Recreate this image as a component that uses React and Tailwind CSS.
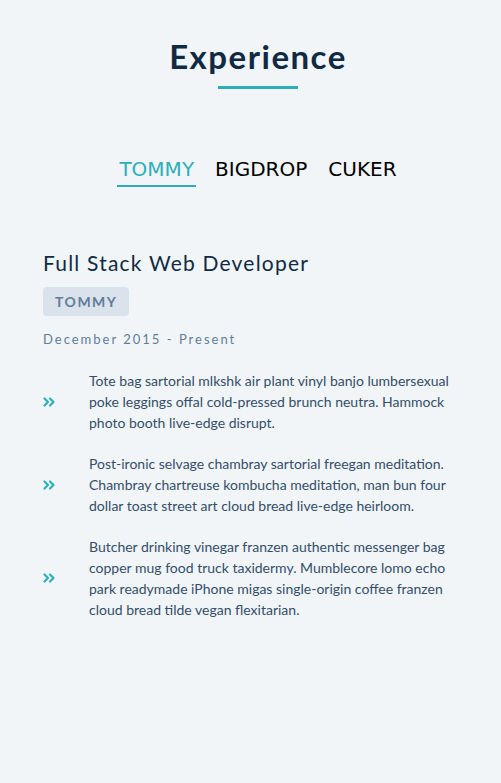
import React, { useState } from 'react';

const jobs = {
  TOMMY: {
    title: 'Full Stack Web Developer',
    dates: 'December 2015 - Present',
    duties: [
      'Tote bag sartorial mlkshk air plant vinyl banjo lumbersexual poke leggings offal cold-pressed brunch neutra. Hammock photo booth live-edge disrupt.',
      'Post-ironic selvage chambray sartorial freegan meditation. Chambray chartreuse kombucha meditation, man bun four dollar toast street art cloud bread live-edge heirloom.',
      'Butcher drinking vinegar franzen authentic messenger bag copper mug food truck taxidermy. Mumblecore lomo echo park readymade iPhone migas single-origin coffee franzen cloud bread tilde vegan flexitarian.',
    ],
  },
  BIGDROP: { title: 'Front-End Engineer', dates: 'May 2015 - December 2015', duties: [] },
  CUKER: { title: 'Engineering Intern', dates: 'May 2014 - September 2015', duties: [] },
};

const Arrows = () => (
  <svg width="12" height="10" viewBox="0 0 12 10" fill="none" stroke="#2cb1bc" strokeWidth="2.2" strokeLinecap="round" strokeLinejoin="round">
    <path d="M1.5 1.5 5 5 1.5 8.5" />
    <path d="M7 1.5 10.5 5 7 8.5" />
  </svg>
);

export default function App() {
  const [active, setActive] = useState('TOMMY');
  const job = jobs[active];

  return (
    <div className="min-h-screen bg-[#f1f5f8] font-['Lato',sans-serif] text-[#102a43]">
      <div className="pt-[36px] pl-[15px] flex flex-col items-center">
        <h2 className="text-[33px] leading-[40px] font-bold tracking-[1.5px] text-[#102a43]">Experience</h2>
        <div className="mt-[10px] w-[80px] h-[3px] bg-[#2caeba]" />
      </div>

      <div className="mt-[67px] pl-[15px] flex justify-center gap-[17px]">
        {Object.keys(jobs).map((k) => (
          <button
            key={k}
            onClick={() => setActive(k)}
            className={`px-[2px] pb-[3px] text-[20px] leading-[26px] font-['DejaVu_Sans',sans-serif] border-b-2 ${
              active === k ? 'text-[#2caeba] border-[#2caeba]' : 'text-black border-transparent'
            }`}
          >
            {k}
          </button>
        ))}
      </div>

      <div className="mt-[62px] px-[43px]">
        <h3 className="text-[21px] leading-[28px] tracking-[1.2px] text-[#102a43]">{job.title}</h3>
        <span className="mt-[10px] inline-block rounded-[4px] bg-[#dae2ec] px-[12px] py-[5px] text-[14px] leading-[19px] font-bold tracking-[1.5px] text-[#617d98]">
          {active}
        </span>
        <p className="mt-[14px] text-[13px] leading-[18px] tracking-[2px] text-[#617d98]">{job.dates}</p>

        <div className="mt-[22px] flex flex-col gap-[20px]">
          {job.duties.map((d, i) => (
            <div key={i} className="flex items-center">
              <div className="w-[46px] shrink-0 flex items-center">
                <Arrows />
              </div>
              <p className="text-[14px] leading-[21px] text-[#334e68]">{d}</p>
            </div>
          ))}
        </div>
      </div>
    </div>
  );
}
